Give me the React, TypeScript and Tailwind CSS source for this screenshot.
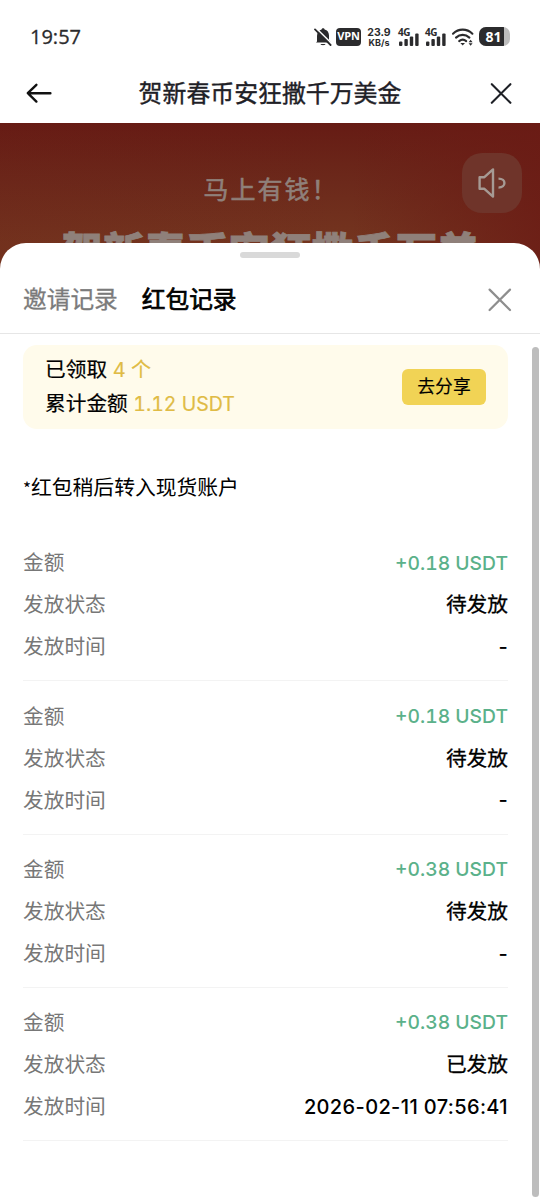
import React from 'react';

type RewardRecord = {
  amount: string;
  status: string;
  time: string;
};

const records: RewardRecord[] = [
  { amount: '+0.18 USDT', status: '待发放', time: '-' },
  { amount: '+0.18 USDT', status: '待发放', time: '-' },
  { amount: '+0.38 USDT', status: '待发放', time: '-' },
  { amount: '+0.38 USDT', status: '已发放', time: '2026-02-11 07:56:41' },
];

const MutedBell: React.FC = () => (
  <svg width="18" height="20" viewBox="0 0 18 20" fill="none">
    <path d="M3 14.5V9C3 5.4 5.2 3.2 7.6 2.6C7.8 .9 10.4 .9 10.6 2.6C13.4 3.2 15 5.6 15 8.6V13L17 15.6H2Z" fill="#2b2b2d" />
    <path d="M6.5 17H11.5C11 18.6 7 18.6 6.5 17Z" fill="#2b2b2d" />
    <path d="M2.2 1.2L18 17" stroke="#fff" strokeWidth="1.6" />
    <path d="M1 2.4L16.6 18" stroke="#2b2b2d" strokeWidth="1.8" strokeLinecap="round" />
  </svg>
);

const MobileSignal: React.FC = () => (
  <div className="relative h-5 w-[22px]">
    <span className="absolute left-0 top-0 text-[10px] leading-[10px] font-bold tracking-[-0.4px]">4G</span>
    <svg className="absolute inset-0" width="22" height="20" viewBox="0 0 22 20" fill="#2b2b2d">
      <rect x="1" y="14.5" width="3.4" height="4.5" rx="1" />
      <rect x="6.4" y="12" width="3.4" height="7" rx="1" />
      <rect x="11.8" y="9.5" width="3.4" height="9.5" rx="1" />
      <rect x="17.2" y="6.5" width="3.4" height="12.5" rx="1" />
    </svg>
  </div>
);

const Wifi: React.FC = () => (
  <svg width="24" height="20" viewBox="0 0 24 20" fill="none" stroke="#2b2b2d" strokeWidth="2.1" strokeLinecap="round">
    <path d="M2 6.7C7.6 1.3 15.8 1.3 21.4 6.7" />
    <path d="M5 10.6C9 7 14.4 7 18.4 10.6" />
    <path d="M8.2 14.1C10.4 12.3 13 12.3 15.2 14.1" />
    <path d="M9.4 16H14L11.7 18.4Z" fill="#2b2b2d" stroke="none" />
    <path d="M17.6 15.3L19.6 12.8L21.6 15.3ZM17.6 16.3H21.6L19.6 18.8Z" fill="#2b2b2d" stroke="none" />
  </svg>
);

const StatusBar: React.FC = () => (
  <div className="flex h-[60px] items-center pl-[30px] pr-[30px] pt-[13px] text-[#2b2b2d] font-['Open_Sans',sans-serif]">
    <span className="text-[20px] leading-6 font-medium [-webkit-text-stroke:0.3px]">19:57</span>
    <div className="ml-auto flex items-center">
      <MutedBell />
      <span className="ml-[4px] flex h-[18px] w-[25px] items-center justify-center rounded-[4px] bg-[#2b2b2d] text-[11px] font-bold tracking-[-0.2px] text-white">
        VPN
      </span>
      <div className="ml-[6px] flex w-[24px] flex-col items-center font-[Inter,sans-serif] font-bold">
        <span className="text-[10.5px] leading-[11px]">23.9</span>
        <span className="text-[9px] leading-[9px]">KB/s</span>
      </div>
      <div className="ml-[7px] flex gap-[5px]">
        <MobileSignal />
        <MobileSignal />
      </div>
      <div className="ml-[4px]">
        <Wifi />
      </div>
      <div className="ml-[4px] flex h-[19px] w-[31px] items-center overflow-hidden rounded-[7px] bg-[#bdbdbd]">
        <span className="flex h-full w-[25px] items-center justify-center bg-[#2b2b2d] pl-[4px] text-[14px] font-bold text-white">
          81
        </span>
      </div>
    </div>
  </div>
);

const NavBar: React.FC = () => (
  <div className="flex h-[63px] items-center justify-between pl-[26px] pr-[28px] pt-[4px]">
    <svg width="26" height="22" viewBox="0 0 26 22" fill="none" stroke="#111" strokeWidth="2.4" strokeLinecap="round" strokeLinejoin="round">
      <path d="M24.4 10.2H2M10.4 1.8L1.8 10.2L10.4 18.6" />
    </svg>
    <h1 className="pr-[2px] text-[23.9px] leading-8 text-[#1e2026] [-webkit-text-stroke:0.4px_#1e2026]">贺新春币安狂撒千万美金</h1>
    <svg width="22" height="22" viewBox="0 0 22 22" fill="none" stroke="#1e2026" strokeWidth="2.1" strokeLinecap="round">
      <path d="M1.8 1.2L20.4 19.8M20.4 1.2L1.8 19.8" />
    </svg>
  </div>
);

const Hero: React.FC = () => (
  <div className="relative h-[150px] shrink-0 overflow-hidden bg-linear-to-b from-[#661b14] from-0% via-[#6c291b] via-40% to-[#74351f] to-80% text-center text-[#8f807a]">
    <div className="absolute inset-0 bg-linear-to-r from-[#6b1b15]/15 from-0% via-[#6b1b15]/0 via-65% to-[#6b1b15]/80" />
    <div className="relative pt-[47px]">
      <p className="pl-[2px] text-[25px] leading-[40px] tracking-[2px] [-webkit-text-stroke:0.6px_#8f807a]">马上有钱！</p>
      <p className="mt-[13px] whitespace-nowrap text-[41.8px] leading-[60px] font-black [-webkit-text-stroke:0.8px_#8f807a]">贺新春币安狂撒千万美</p>
    </div>
    <button className="absolute right-[18px] top-[30px] flex size-[60px] items-center justify-center rounded-[20px] bg-[#6f342a]" aria-label="声音">
      <svg width="30" height="32" viewBox="0 0 30 32" fill="none" stroke="#a69a94" strokeWidth="2.4" strokeLinejoin="round">
        <path d="M2.6 10.2H7.4L16 2.4V29.6L7.4 21.8H2.6Z" />
        <path d="M21.5 11.6C29.4 11.6 29.4 20.6 21.5 20.6" />
      </svg>
    </button>
  </div>
);

const Summary: React.FC = () => (
  <div className="flex h-[84px] items-center justify-between rounded-[14px] bg-[#fffbeb] pl-[22px] pr-[22px]">
    <div className="text-[20.7px] leading-[33px] text-black tabular-nums [-webkit-text-stroke:0.2px]">
      <div>
        已领取 <span className="text-[20px] text-[#e0bb45]">4 个</span>
      </div>
      <div>
        累计金额 <span className="text-[19.5px] text-[#e0bb45]">1.12 USDT</span>
      </div>
    </div>
    <button className="h-9 w-[84px] rounded-[6px] bg-[#f1d355] text-[17.8px] leading-9 text-black [-webkit-text-stroke:0.15px]">
      去分享
    </button>
  </div>
);

const RecordItem: React.FC<{ record: RewardRecord }> = ({ record }) => (
  <li className="border-b border-[#f3f3f3] pt-[14px] pb-[12.3px]">
    <div className="flex h-[42px] items-center justify-between">
      <span className="text-[20.7px] text-[#777]">金额</span>
      <span className="text-[19.3px] font-medium text-[#5bb18a] tabular-nums">{record.amount}</span>
    </div>
    <div className="flex h-[42px] items-center justify-between">
      <span className="text-[20.7px] text-[#777]">发放状态</span>
      <span className="text-[20.7px] text-black [-webkit-text-stroke:0.3px]">{record.status}</span>
    </div>
    <div className="flex h-[42px] items-center justify-between">
      <span className="text-[20.7px] text-[#777]">发放时间</span>
      <span className="text-[20px] font-medium tracking-[0.37px] text-black">{record.time}</span>
    </div>
  </li>
);

const App: React.FC = () => {
  return (
    <div className="flex h-[1199px] w-[540px] flex-col overflow-hidden bg-white font-[Inter,'Noto_Sans_CJK_SC',sans-serif]">
      <StatusBar />
      <NavBar />
      <Hero />

      {/* Bottom sheet */}
      <section className="relative -mt-[30px] flex min-h-0 flex-1 flex-col rounded-t-[26px] bg-white">
        <div className="mx-auto mt-[9px] h-[6px] w-[60px] shrink-0 rounded-full bg-[#d9d9d9]" />
        <div className="flex h-[76px] shrink-0 items-center border-b border-[#e6e6e6] pl-[23px] pr-[28px] pt-[9px]">
          <div className="flex flex-1 gap-[24px] text-[23.7px] leading-8">
            <span className="text-[#7b7b7b] [-webkit-text-stroke:0.3px]">邀请记录</span>
            <span className="text-black [-webkit-text-stroke:0.7px]">红包记录</span>
          </div>
          <svg width="24" height="24" viewBox="0 0 24 24" fill="none" stroke="#8e8e8e" strokeWidth="2.2" strokeLinecap="round">
            <path d="M1.6 1.6L22 22M22 1.6L1.6 22" />
          </svg>
        </div>

        <div className="flex min-h-0 flex-1">
          <div className="flex-1 pl-[23px] pr-[24px] pt-[11px]">
            <Summary />
            <p className="mt-[43px] text-[20.8px] leading-8 text-black">
              <span className="font-['Noto_Sans_CJK_SC',sans-serif] text-[17px]">*</span>红包稍后转入现货账户
            </p>
            <ul className="mt-[24px]">
              {records.map((record, i) => (
                <RecordItem key={i} record={record} />
              ))}
            </ul>
          </div>
          <div className="mb-[2px] mr-px mt-[13px] w-[7px] rounded-full bg-[#bdbdbd]" />
        </div>
      </section>
    </div>
  );
};

export default App;
